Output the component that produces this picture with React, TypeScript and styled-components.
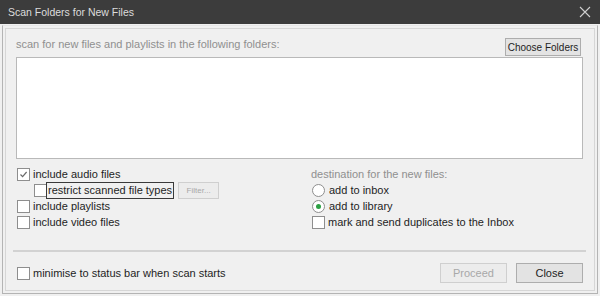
import React from "react";
import styled, { createGlobalStyle } from "styled-components";

const GlobalStyle = createGlobalStyle`
  html, body {
    margin: 0;
    padding: 0;
    background: #f0f0f0;
  }
  body {
    font-family: "Liberation Sans", Arial, sans-serif;
    font-size: 11px;
    color: #1e1e1e;
  }
`;

const Window = styled.div`
  width: 600px;
  height: 296px;
  display: flex;
  flex-direction: column;
  background: #f0f0f0;
  box-sizing: border-box;
  overflow: hidden;
`;

const TitleBar = styled.div`
  height: 24px;
  flex: none;
  display: flex;
  align-items: center;
  justify-content: space-between;
  background: #3c3c3c;
  color: #dcdcdc;
  padding: 0 8px 0 8px;
  font-size: 10.5px;
`;

const CloseIcon = styled.svg`
  width: 12px;
  height: 12px;
  margin-right: 1px;
`;

// two thin lines round the dialog body
const OuterFrame = styled.div`
  flex: 1;
  display: flex;
  padding: 1px 2px 2px 2px;
`;

const FrameLine = styled.div`
  flex: 1;
  display: flex;
  border: 1px solid #b4b4b4;
  border-top-color: #e6e6e6;
  padding: 2px;
`;

const Body = styled.div`
  flex: 1;
  display: flex;
  flex-direction: column;
  border: 1px solid #d6d6d6;
  padding: 8px 11px 0 10px;
`;

const HeaderRow = styled.div`
  display: flex;
  align-items: flex-end;
  justify-content: space-between;
  height: 19px;
  margin-bottom: 1px;
`;

const MutedLabel = styled.div`
  color: #8f8f8f;
  line-height: 16px;
  white-space: nowrap;
`;

const FolderLabel = styled(MutedLabel)`
  padding-bottom: 4px;
`;

type ButtonProps = {
  disabled?: boolean;
};

const Button = styled.div<ButtonProps>`
  box-sizing: border-box;
  display: flex;
  align-items: center;
  justify-content: center;
  white-space: nowrap;
  border: 1px solid ${(props) => (props.disabled ? "#cfcfcf" : "#adadad")};
  background: ${(props) => (props.disabled ? "#ececec" : "#e3e3e3")};
  color: ${(props) => (props.disabled ? "#a8a8a8" : "#1e1e1e")};
`;

const ChooseButton = styled(Button)`
  width: 76px;
  height: 18px;
  font-size: 10px;
  margin-right: 2px;
`;

const FolderList = styled.div`
  height: 100px;
  background: #ffffff;
  border: 1px solid #b9b9b9;
`;

const Options = styled.div`
  display: grid;
  grid-template-columns: 295px 1fr;
  margin-top: 7px;
`;

const Column = styled.div`
  display: flex;
  flex-direction: column;
`;

type RowProps = {
  indent?: number;
};

const OptionRow = styled.div<RowProps>`
  display: flex;
  align-items: center;
  height: 16px;
  white-space: nowrap;
  padding-left: ${(props) => props.indent || 0}px;
`;

const Box = styled.span`
  box-sizing: border-box;
  width: 13px;
  height: 13px;
  flex: none;
  border: 1px solid #8e8e8e;
  background: #ffffff;
  display: flex;
  align-items: center;
  justify-content: center;
  margin-left: 1px;
  margin-right: 3px;
`;

const Radio = styled(Box)`
  border-radius: 50%;
  margin-right: 4px;
`;

const RadioDot = styled.span`
  width: 5px;
  height: 5px;
  border-radius: 50%;
  background: #2ba043;
`;

const FocusLabel = styled.span`
  box-sizing: border-box;
  height: 17px;
  display: flex;
  align-items: center;
  border: 1px solid #3a3a3a;
  padding: 0 1px;
  margin-left: -4px;
`;

const FilterButton = styled(Button)`
  width: 41px;
  height: 17px;
  font-size: 8px;
  margin-left: 4px;
`;

const Separator = styled.div`
  height: 2px;
  background: #d2d2d2;
  margin: 20px -3px 0 -3px;
`;

const Footer = styled.div`
  display: flex;
  align-items: center;
  margin-top: 11px;
  white-space: nowrap;
`;

const FooterSpacer = styled.div`
  flex: 1;
`;

const FooterButton = styled(Button)`
  width: 67px;
  height: 20px;
  font-size: 11px;
  margin-left: 9px;
`;

function Check({ checked }: { checked?: boolean }) {
  return (
    <Box>
      {checked && (
        <svg width="9" height="9" viewBox="0 0 9 9">
          <path d="M1.5 4.5 L3.6 6.6 L7.6 2" fill="none" stroke="#6a6a6a" strokeWidth="1.2" />
        </svg>
      )}
    </Box>
  );
}

export default function App() {
  return (
    <React.Fragment>
      <GlobalStyle />
      <Window>
        <TitleBar>
          <span>Scan Folders for New Files</span>
          <CloseIcon viewBox="0 0 12 12">
            <path d="M1 1 L11 11 M11 1 L1 11" stroke="#d0d0d0" strokeWidth="1.1" />
          </CloseIcon>
        </TitleBar>
        <OuterFrame>
          <FrameLine>
            <Body>
              <HeaderRow>
                <FolderLabel>scan for new files and playlists in the following folders:</FolderLabel>
                <ChooseButton>Choose Folders</ChooseButton>
              </HeaderRow>
              <FolderList />
              <Options>
                <Column>
                  <OptionRow>
                    <Check checked />
                    include audio files
                  </OptionRow>
                  <OptionRow indent={17}>
                    <Check />
                    <FocusLabel>restrict scanned file types</FocusLabel>
                    <FilterButton disabled>Filter...</FilterButton>
                  </OptionRow>
                  <OptionRow>
                    <Check />
                    include playlists
                  </OptionRow>
                  <OptionRow>
                    <Check />
                    include video files
                  </OptionRow>
                </Column>
                <Column>
                  <OptionRow>
                    <MutedLabel>destination for the new files:</MutedLabel>
                  </OptionRow>
                  <OptionRow>
                    <Radio />
                    add to inbox
                  </OptionRow>
                  <OptionRow>
                    <Radio>
                      <RadioDot />
                    </Radio>
                    add to library
                  </OptionRow>
                  <OptionRow>
                    <Check />
                    mark and send duplicates to the Inbox
                  </OptionRow>
                </Column>
              </Options>
              <Separator />
              <Footer>
                <Check />
                minimise to status bar when scan starts
                <FooterSpacer />
                <FooterButton disabled>Proceed</FooterButton>
                <FooterButton>Close</FooterButton>
              </Footer>
            </Body>
          </FrameLine>
        </OuterFrame>
      </Window>
    </React.Fragment>
  );
}
